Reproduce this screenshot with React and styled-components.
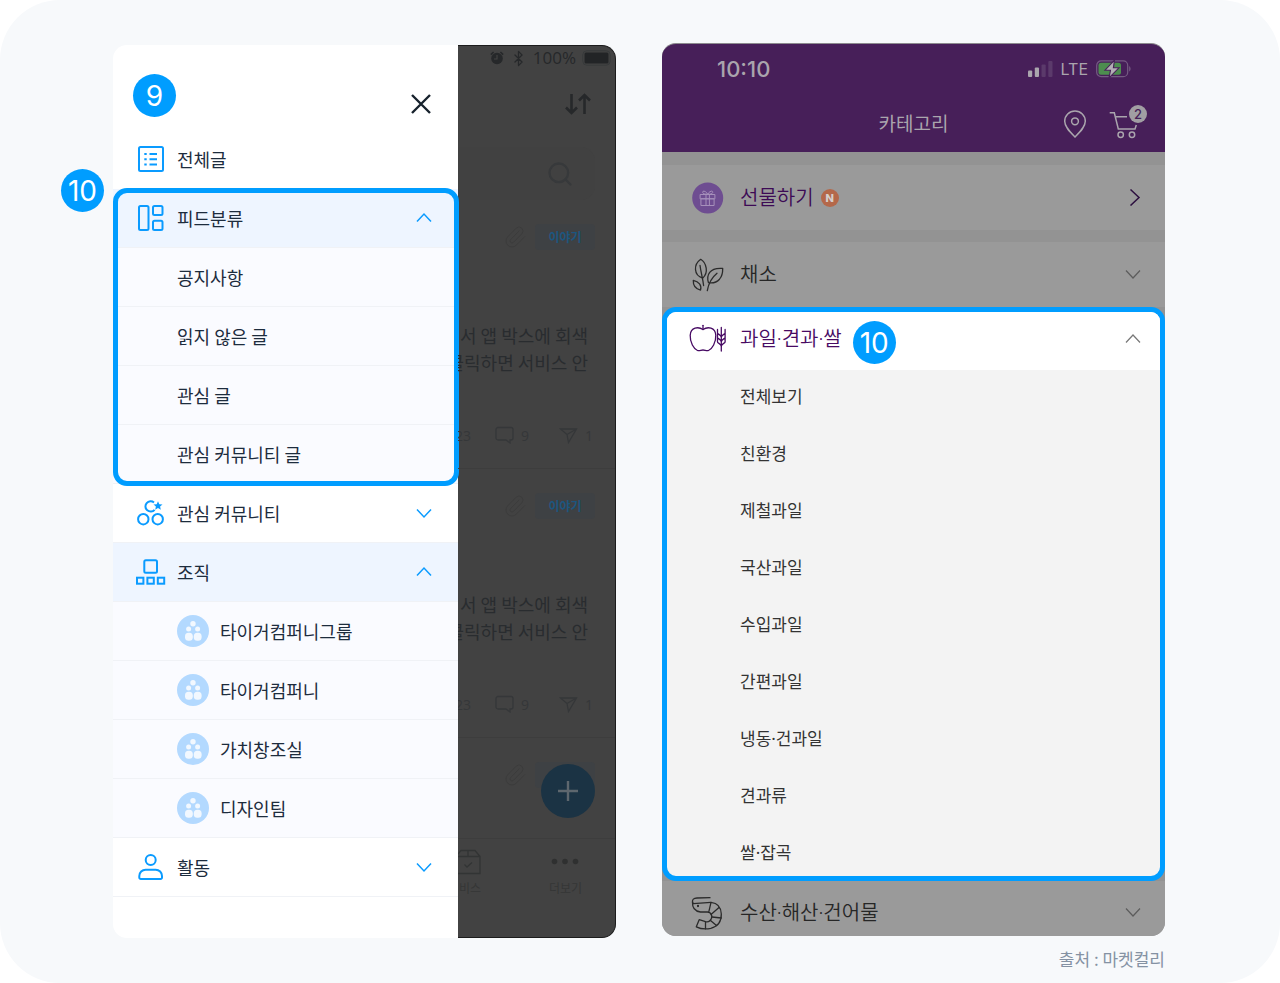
import React from "react";
import styled, { createGlobalStyle, css } from "styled-components";
import { Paperclip, Search, Bluetooth } from "lucide-react";

const GlobalStyle = createGlobalStyle`
  *, *::before, *::after {
    box-sizing: border-box;
  }

  body {
    margin: 0;
    background: #ffffff;
    font-family: "Noto Sans CJK KR", sans-serif;
  }

  button {
    border: 0;
    padding: 0;
    background: none;
    font: inherit;
    color: inherit;
    text-align: left;
    cursor: pointer;
  }

  a {
    color: inherit;
    text-decoration: none;
  }

  ul {
    list-style: none;
    margin: 0;
    padding: 0;
  }

  svg {
    display: block;
    flex: none;
  }
`;

const Page = styled.main`
  display: grid;
  grid-template-columns: minmax(0, 1fr) minmax(0, 1fr);
  gap: 46px;
  align-items: start;
  min-height: 100vh;
  padding: 43px 115px 11px 113px;
  border-radius: 60px;
  background: #f7f9fb;

  @media (max-width: 960px) {
    grid-template-columns: minmax(0, 1fr);
  }
`;

/* ---------- shared ---------- */

const Badge = styled.span`
  position: absolute;
  display: flex;
  align-items: center;
  justify-content: center;
  width: 43px;
  height: 43px;
  padding-top: 2px;
  border-radius: 50%;
  background: #009dff;
  color: #ffffff;
  font-family: Inter, sans-serif;
  font-size: 28px;
  font-weight: 400;
  line-height: 41px;
  z-index: 2;
`;

const ChevronSvg = ({ direction = "down", color, width = 1.5 }) => {
  const paths = {
    down: "M1 4.5 8 12l7-7.5",
    up: "M1 11.5 8 4l7 7.5",
    right: "M5.5 0.5 14 8.5 5.5 16.5",
  };
  return (
    <svg width="16" height="17" viewBox="0 0 16 17" fill="none" stroke={color} strokeWidth={width} aria-hidden="true">
      <path d={paths[direction]} />
    </svg>
  );
};

/* ---------- community app ---------- */

const CommunityPhone = styled.section`
  display: grid;
  grid-template-columns: 345px minmax(0, 1fr);
  margin-top: 2px;
`;

const Drawer = styled.nav`
  position: relative;
  border-radius: 14px 0 0 14px;
  background: #ffffff;
  color: #1d2c3d;
`;

const DrawerBadge = styled(Badge)`
  top: 29px;
  left: 20px;
`;

const DrawerHeader = styled.div`
  display: flex;
  align-items: flex-end;
  justify-content: flex-end;
  height: 85px;
  padding: 0 26px 15px;
`;

const DrawerRow = styled.button`
  display: flex;
  align-items: center;
  gap: 10px;
  width: 100%;
  height: 59px;
  padding: 0 26px 0 22px;
  font-size: 18px;
  line-height: 26px;
  border-bottom: 1px solid ${(p) => (p.$plain ? "#ffffff" : "#f0f2f6")};
  background: ${(p) => (p.$open ? "#eef5ff" : "transparent")};

  > svg:last-child:not(:first-child) {
    margin-left: auto;
  }
`;

const SubRow = styled(DrawerRow)`
  gap: 11px;
  padding-left: 64px;
  background: #fafbff;
`;

const FeedGroup = styled.div`
  position: relative;

  &::after {
    content: "";
    position: absolute;
    inset: -1px -1px -2px 0;
    border: 5px solid #009dff;
    border-radius: 14px;
    pointer-events: none;
  }
`;

const FeedBadge = styled(Badge)`
  top: -20px;
  left: -52px;
`;

const MenuIcon = ({ children }) => (
  <svg width="32" height="32" viewBox="0 0 32 32" fill="none" stroke="#0a9bff" strokeWidth="2" aria-hidden="true">
    {children}
  </svg>
);

const ListIcon = () => (
  <MenuIcon>
    <rect x="4" y="4" width="24" height="24" rx="1.5" />
    <path d="M9.3 11h2.4M9.3 16.2h2.4M9.3 21.4h2.4M14.5 11H22M14.5 16.2H22M14.5 21.4H22" />
  </MenuIcon>
);

const FeedIcon = () => (
  <MenuIcon>
    <rect x="4" y="4" width="9.5" height="24" rx="1.5" />
    <rect x="18" y="4" width="9.5" height="9" rx="1.5" />
    <rect x="18" y="18.7" width="9.5" height="9.3" rx="1.5" />
  </MenuIcon>
);

const CommunityIcon = () => (
  <MenuIcon>
    <circle cx="8.3" cy="22.2" r="5.2" />
    <circle cx="22.7" cy="22.2" r="5.2" />
    <path d="M19 5.4a5.2 5.2 0 1 0 .6 7.4" />
    <path
      d="M23 4.2l1.3 3 3.2.3-2.4 2.1.7 3.2-2.8-1.7-2.8 1.7.7-3.2-2.4-2.1 3.2-.3z"
      fill="#0a9bff"
      stroke="none"
    />
  </MenuIcon>
);

const OrgIcon = () => (
  <MenuIcon>
    <rect x="9.3" y="4.3" width="12.7" height="12.5" rx="1.5" />
    <rect x="2" y="21.7" width="6.4" height="6" />
    <rect x="12.4" y="21.7" width="6.4" height="6" />
    <rect x="22.8" y="21.7" width="6.4" height="6" />
  </MenuIcon>
);

const PersonIcon = () => (
  <MenuIcon>
    <circle cx="15.7" cy="9" r="5" />
    <path d="M4.3 26.5V25a6.3 6.3 0 0 1 6.3-6.3h10.1A6.3 6.3 0 0 1 27 25v1.5a1.5 1.5 0 0 1-1.5 1.5H5.8a1.5 1.5 0 0 1-1.5-1.5z" />
  </MenuIcon>
);

const TeamAvatar = () => (
  <svg width="32" height="32" viewBox="0 0 32 32" fill="#f2f8ff" aria-hidden="true">
    <circle cx="16" cy="16" r="16" fill="#b3d9ff" />
    <circle cx="16" cy="8.7" r="2.7" />
    <circle cx="11.6" cy="14" r="2.5" />
    <circle cx="20.6" cy="14" r="2.5" />
    <rect x="8" y="17.7" width="7.8" height="8" rx="3.5" />
    <rect x="16.8" y="17.7" width="7.8" height="8" rx="3.5" />
  </svg>
);

const Feed = styled.div`
  overflow: hidden;
  border: 1px solid #1c1c1c;
  border-left: 0;
  border-radius: 0 14px 14px 0;
  background: #424242;
  color: #292c2f;
`;

const FeedStatus = styled.div`
  display: flex;
  align-items: center;
  justify-content: flex-end;
  gap: 6px;
  height: 24px;
  padding-right: 4px;
  font-family: "Open Sans", sans-serif;
  font-size: 17px;
  line-height: 24px;
  color: #26282a;
`;

const FeedTools = styled.div`
  display: flex;
  align-items: center;
  justify-content: flex-end;
  height: 68px;
  padding-right: 23px;
`;

const SearchBox = styled.div`
  display: flex;
  align-items: center;
  justify-content: flex-end;
  height: 53px;
  margin: 9px 20px 0 0;
  padding-right: 21px;
  border-radius: 0 14px 14px 0;
  background: #414141;
  color: #37393b;
`;

const Post = styled.article`
  height: ${(p) => (p.$short ? "101px" : "269px")};
  padding: 24px 20px 0 0;
  border-bottom: 1px solid #3d3d3d;
`;

const PostTop = styled.div`
  display: flex;
  align-items: center;
  justify-content: flex-end;
  gap: 8px;
  height: 26px;
  color: #3c3c3c;
`;

const Tag = styled.span`
  width: 60px;
  height: 26px;
  border-radius: 4px;
  background: #3e4144;
  color: #1c567f;
  font-size: 12px;
  font-weight: 700;
  line-height: 26px;
  text-align: center;
`;

const PostText = styled.p`
  display: flex;
  flex-direction: column;
  align-items: flex-end;
  margin: 72px 7px 49px 0;
  font-size: 18px;
  line-height: 27px;
  white-space: nowrap;
`;

const PostStats = styled.div`
  display: flex;
  align-items: center;
  justify-content: flex-end;
  height: 20px;
  padding-right: 2px;
  font-family: "Open Sans", sans-serif;
  font-size: 14px;
  color: #353739;
`;

const Stat = styled.span`
  display: flex;
  align-items: center;
  gap: 7px;
  margin-left: ${(p) => p.$space || 0}px;
`;

const PostArea = styled.div`
  position: relative;
`;

const AddButton = styled.button`
  position: absolute;
  right: 20px;
  bottom: 21px;
  display: flex;
  align-items: center;
  justify-content: center;
  width: 54px;
  height: 54px;
  border-radius: 50%;
  background: #1b3344;
`;

const TabBar = styled.div`
  display: flex;
  justify-content: space-between;
  height: 98px;
  padding: 10px 33px 0 0;
  font-size: 12px;
  line-height: 18px;
  color: #353636;
`;

const Tab = styled.button`
  display: flex;
  flex-direction: column;
  align-items: ${(p) => (p.$cut ? "flex-end" : "center")};
  gap: 4px;
  width: ${(p) => (p.$cut ? "23px" : "auto")};
  height: 50px;
  white-space: nowrap;
`;

const AlarmIcon = () => (
  <svg width="14" height="14" viewBox="0 0 14 14" aria-hidden="true">
    <circle cx="7" cy="7.5" r="5.8" fill="#26282a" />
    <path d="M.8 3.6 3.6 1M13.2 3.6 10.4 1" stroke="#26282a" strokeWidth="1.5" />
    <path d="M7 4v4h-3" fill="none" stroke="#424242" strokeWidth="1.2" />
  </svg>
);

const BatteryIcon = () => (
  <svg width="29" height="16" viewBox="0 0 29 16" fill="none" aria-hidden="true">
    <rect x=".8" y=".8" width="27.4" height="14.4" rx="4" stroke="#373a3b" />
    <rect x="2.5" y="2.5" width="24" height="11" rx="1.5" fill="#222426" />
  </svg>
);

const SortIcon = () => (
  <svg width="28" height="22" viewBox="0 0 28 22" fill="none" stroke="#26282a" strokeWidth="2.6" aria-hidden="true">
    <path d="M7.5 1v19M2 14.5 7.5 20l5.5-5.5M20.5 21V2M15 7.5 20.5 2 26 7.5" />
  </svg>
);

const CommentIcon = () => (
  <svg width="19" height="18" viewBox="0 0 19 18" fill="none" stroke="#353739" strokeWidth="1.3" aria-hidden="true">
    <path d="M3 1.5h13a2 2 0 0 1 2 2V12a2 2 0 0 1-2 2h-1v3l-4-3H3a2 2 0 0 1-2-2V3.5a2 2 0 0 1 2-2z" />
  </svg>
);

const SendIcon = () => (
  <svg width="19" height="17" viewBox="0 0 19 17" fill="none" stroke="#353739" strokeWidth="1.3" aria-hidden="true">
    <path d="M1.5 2h16l-8 13.5L8 7.5zM8 7.5 17.5 2" />
  </svg>
);

const ServiceIcon = () => (
  <svg width="26" height="26" viewBox="0 0 26 26" fill="none" stroke="#323434" strokeWidth="1.3" aria-hidden="true">
    <path d="M1 7.5h24v17H1zM1 7.5l5-6h14l5 6M13 1.5v6M9.5 15.5 12 18l5-4.5" />
  </svg>
);

const feedItems = ["공지사항", "읽지 않은 글", "관심 글", "관심 커뮤니티 글"];
const orgItems = ["타이거컴퍼니그룹", "타이거컴퍼니", "가치창조실", "디자인팀"];

const FeedPost = () => (
  <Post>
    <PostTop>
      <Paperclip size={24} strokeWidth={1} />
      <Tag>이야기</Tag>
    </PostTop>
    <PostText>
      <span>서 앱 박스에 회색</span>
      <span>클릭하면 서비스 안</span>
    </PostText>
    <PostStats>
      <Stat>23</Stat>
      <Stat $space={24}>
        <CommentIcon />9
      </Stat>
      <Stat $space={30}>
        <SendIcon />1
      </Stat>
    </PostStats>
  </Post>
);

function CommunityApp() {
  return (
    <CommunityPhone>
      <Drawer aria-label="메뉴">
        <DrawerBadge>9</DrawerBadge>
        <DrawerHeader>
          <button type="button" aria-label="닫기">
            <svg width="22" height="22" viewBox="0 0 22 22" stroke="#17222d" strokeWidth="2.4">
              <path d="M2 2l18 18M20 2 2 20" />
            </svg>
          </button>
        </DrawerHeader>
        <DrawerRow type="button" $plain>
          <ListIcon />
          전체글
        </DrawerRow>
        <FeedGroup>
          <FeedBadge>10</FeedBadge>
          <DrawerRow type="button" $open aria-expanded="true">
            <FeedIcon />
            피드분류
            <ChevronSvg direction="up" color="#0a9bff" />
          </DrawerRow>
          {feedItems.map((item) => (
            <SubRow type="button" key={item}>
              {item}
            </SubRow>
          ))}
        </FeedGroup>
        <DrawerRow type="button" aria-expanded="false">
          <CommunityIcon />
          관심 커뮤니티
          <ChevronSvg color="#0a9bff" />
        </DrawerRow>
        <DrawerRow type="button" $open aria-expanded="true">
          <OrgIcon />
          조직
          <ChevronSvg direction="up" color="#0a9bff" />
        </DrawerRow>
        {orgItems.map((item) => (
          <SubRow type="button" key={item}>
            <TeamAvatar />
            {item}
          </SubRow>
        ))}
        <DrawerRow type="button" aria-expanded="false">
          <PersonIcon />
          활동
          <ChevronSvg color="#0a9bff" />
        </DrawerRow>
      </Drawer>

      <Feed>
        <FeedStatus>
          <AlarmIcon />
          <Bluetooth size={17} strokeWidth={1.8} />
          <span>100%</span>
          <BatteryIcon />
        </FeedStatus>
        <FeedTools>
          <button type="button" aria-label="정렬">
            <SortIcon />
          </button>
        </FeedTools>
        <SearchBox>
          <Search size={28} strokeWidth={2} />
        </SearchBox>
        <PostArea>
          <FeedPost />
          <FeedPost />
          <Post $short>
            <PostTop>
              <Paperclip size={24} strokeWidth={1} />
              <Tag />
            </PostTop>
          </Post>
          <AddButton type="button" aria-label="글쓰기">
            <svg width="20" height="20" viewBox="0 0 20 20" stroke="#5e676e" strokeWidth="2.4">
              <path d="M10 0v20M0 10h20" />
            </svg>
          </AddButton>
        </PostArea>
        <TabBar>
          <Tab type="button" $cut>
            <ServiceIcon />
            비스
          </Tab>
          <Tab type="button">
            <svg width="28" height="26" viewBox="0 0 28 26" fill="#2f3030" aria-hidden="true">
              <circle cx="3.5" cy="12.5" r="2.8" />
              <circle cx="14" cy="12.5" r="2.8" />
              <circle cx="24.5" cy="12.5" r="2.8" />
            </svg>
            더보기
          </Tab>
        </TabBar>
      </Feed>
    </CommunityPhone>
  );
}

/* ---------- market app ---------- */

const MarketPhone = styled.section`
  overflow: hidden;
  border-top: 1px solid #8c8a8e;
  border-radius: 14px;
  background: #939393;
  font-family: "Noto Sans", "Noto Sans CJK KR", sans-serif;
  font-weight: 350;
`;

const MarketHeader = styled.header`
  background: #471f59;
  color: #aaa5ad;
`;

const MarketStatus = styled.div`
  display: flex;
  align-items: center;
  gap: 8px;
  height: 50px;
  padding: 0 34px 0 55px;
  font-family: Inter, sans-serif;
  font-size: 16px;
  font-weight: 400;
`;

const Clock = styled.time`
  margin-right: auto;
  font-size: 22px;
  font-weight: 500;
`;

const TitleBar = styled.div`
  display: grid;
  grid-template-columns: 1fr auto 1fr;
  align-items: center;
  height: 58px;
  padding: 2px 18px 0;
`;

const Title = styled.h1`
  grid-column: 2;
  margin: 0;
  font-size: 19px;
  font-weight: 400;
  line-height: 28px;
`;

const TitleActions = styled.div`
  display: flex;
  align-items: center;
  justify-content: flex-end;
  gap: 22px;
`;

const CartButton = styled.button`
  position: relative;
`;

const CartCount = styled.span`
  position: absolute;
  top: 1px;
  right: 0;
  width: 18px;
  height: 18px;
  border-radius: 50%;
  background: #a19ea3;
  color: #471f59;
  font-family: Inter, sans-serif;
  font-size: 13px;
  font-weight: 500;
  line-height: 18px;
  text-align: center;
`;

const rowLayout = css`
  display: flex;
  align-items: center;
  gap: 13px;
  width: 100%;
  font-size: 20px;
  line-height: 28px;

  > svg:last-child {
    margin-left: auto;
  }
`;

const CategoryRow = styled.button`
  ${rowLayout}
  height: ${(p) => (p.$last ? "55px" : "65px")};
  margin-top: ${(p) => p.$space || 0}px;
  padding: ${(p) => (p.$last ? "8px" : "0")} 24px 0 27px;
  background: #9a9a9a;
  color: ${(p) => (p.$accent ? "#3d0a55" : "#262626")};
`;

const NewMark = styled.span`
  width: 18px;
  height: 18px;
  margin-left: -6px;
  border-radius: 50%;
  background: #b4684a;
  color: #d6cfcc;
  font-family: Inter, sans-serif;
  font-size: 11px;
  font-weight: 800;
  line-height: 18px;
  text-align: center;
`;

const OpenCategory = styled.div`
  border: 5px solid #009dff;
  border-radius: 14px;
  background: #f3f3f3;
  overflow: hidden;
`;

const OpenRow = styled.button`
  ${rowLayout}
  height: 58px;
  padding: 0 19px 4px 22px;
  background: #ffffff;
  color: #470a63;
`;

const OpenLabel = styled.span`
  position: relative;
`;

const OpenBadge = styled(Badge)`
  top: -4px;
  left: calc(100% + 11px);
`;

const SubList = styled.ul`
  display: flex;
  flex-direction: column;
  gap: 32px;
  padding: 14px 22px 11px 73px;
  font-size: 17px;
  font-weight: 400;
  line-height: 25px;
  color: #333333;

  a {
    display: block;
  }
`;

const Source = styled.p`
  margin: 10px 0 0;
  font-size: 17px;
  line-height: 26px;
  color: #8592a3;
  text-align: right;
`;

const SignalIcon = () => (
  <svg width="25" height="16" viewBox="0 0 25 16" fill="#aaa5ad" aria-hidden="true">
    <rect x="0" y="9.5" width="4.2" height="6.5" rx="1" />
    <rect x="6.8" y="6.5" width="4.2" height="9.5" rx="1" />
    <rect x="13.5" y="3.5" width="4.2" height="12.5" rx="1" fill="#5b3a6b" />
    <rect x="20.3" y="0" width="4.2" height="16" rx="1" fill="#5b3a6b" />
  </svg>
);

const ChargingIcon = () => (
  <svg width="35" height="18" viewBox="0 0 35 18" fill="none" aria-hidden="true">
    <rect x=".7" y=".9" width="31" height="15.8" rx="4.5" stroke="#755b83" strokeWidth="1.2" />
    <rect x="2.5" y="2.8" width="22.5" height="12" rx="2.5" fill="#4d8d4f" />
    <path d="M33.2 6.2c1.8.6 1.8 4.6 0 5.2z" fill="#755b83" />
    <path d="M18.5.2 9 10.2h5.5L13 17.8l10-10h-5.6z" fill="#b3afb5" stroke="#471f59" strokeWidth="1.1" />
  </svg>
);

const PinIcon = () => (
  <svg width="24" height="28" viewBox="0 0 24 28" fill="none" stroke="#aaa5ad" strokeWidth="1.5" aria-hidden="true">
    <path d="M12 27C7 22 1.7 17 1.7 11.3a10.3 10.3 0 0 1 20.6 0C22.3 17 17 22 12 27z" />
    <circle cx="12" cy="11.3" r="3.4" />
  </svg>
);

const CartIcon = () => (
  <svg width="38" height="40" viewBox="0 0 38 40" fill="none" stroke="#aaa5ad" strokeWidth="1.5" aria-hidden="true">
    <path d="M.7 8.7h4.6l4 16.3H26l1.3-4M7 12.7h11" />
    <circle cx="11.7" cy="30.7" r="2.7" />
    <circle cx="23" cy="30.7" r="2.7" />
  </svg>
);

const CategoryIcon = ({ color = "#2b2b2b", children }) => (
  <svg
    width="38"
    height="38"
    viewBox="0 0 38 38"
    fill="none"
    stroke={color}
    strokeWidth="1.3"
    strokeLinecap="round"
    strokeLinejoin="round"
    aria-hidden="true"
  >
    {children}
  </svg>
);

const GiftIcon = () => (
  <CategoryIcon color="#a690bb">
    <circle cx="18.7" cy="19" r="15.5" fill="#6e4d91" stroke="none" />
    <path
      d="M11.5 15.5h14.4v4.3H11.5zM12.3 19.8h12.8v6.7H12.3zM17 15.5v11M20.4 15.5v11M18.7 15.3c-1-3-5.4-4.5-5-1.8.2 1.3 2.5 1.8 5 1.8 2.5 0 4.8-.5 5-1.8.4-2.7-4-1.2-5 1.8z"
      strokeWidth="1"
    />
  </CategoryIcon>
);

const LeafIcon = () => (
  <CategoryIcon>
    <path d="M11.7 3.3C8 6 6.2 9.5 6.5 13.5c.3 4.5 2.8 7.3 7.3 8.5 2.8-2.5 4-5.8 3.4-9.8-.6-4-2.2-7-5.5-8.900z" />
    <path d="M11 9.3c.8 7 2.8 13 3.6 20.2" />
    <path d="M33.7 12.4c-6-.5-10.5.6-13 4-2.3 3-2.5 6.5-1.2 10.3 4.7.7 8.3-.4 11-3.5 2.3-2.8 3.3-6.3 3.2-10.800z" />
    <path d="M28 17.3c-5.5 4.5-8.3 9.2-9.7 17.3" />
    <path d="M4.3 24.3c-.3 5.2 1.8 8.5 7.2 9.8 1.5-4.6-1.6-8.6-7.2-9.8z" />
  </CategoryIcon>
);

const AppleIcon = () => (
  <CategoryIcon color="#470a63">
    <path d="M14 9.5C9.5 6.5 1.6 7 1.2 15.3.9 22.5 4.8 29 8.5 30.5c2 .7 3.5-.5 5.5-.5s3.5 1.2 5.5.5c3.7-1.5 7.6-8 7.3-15.2C26.4 7 18.5 6.5 14 9.5z" />
    <path d="M14 5.3v4.2" />
    <path d="M32.3 7.5V31M28.5 9.5V13c0 1.5 3.8 1.5 3.8 4.500 0-3 3.8-3 3.8-4.500V9.500M28.500 13v4.500c0 1.500 3.800 1.500 3.800 4.500 0-3 3.800-3 3.800-4.500V13M28.500 17.500V22c0 1.500 3.800 1.500 3.800 4.500 0-3 3.800-3 3.800-4.500v-4.500" />
  </CategoryIcon>
);

const ShrimpIcon = () => (
  <CategoryIcon>
    <path d="M21 3.7 8 4c-3.500.2-4.800 1.500-4.500 4l.8 1.700L22 8.300" />
    <path d="M3.500 8c-.3 5.500 2.500 9.300 8 10h7c3.500.5 5 3 4 6.300-1 2.700-3.200 4-6 3.400l-6.300-2L7.300 32.800c4 2 9.500 2.700 14.500 1.500C28.500 32.500 32.500 27.500 32.300 20 32 12.700 28.500 9 22 8.300l-2.200 9.500" />
    <path d="M22 20.500l8-7M23 23l9.300 1M21.500 26.500l6 5M16.500 28v6.800" />
    <circle cx="9" cy="12" r=".5" fill="#2b2b2b" />
  </CategoryIcon>
);

const fruitItems = [
  "전체보기",
  "친환경",
  "제철과일",
  "국산과일",
  "수입과일",
  "간편과일",
  "냉동·건과일",
  "견과류",
  "쌀·잡곡",
];

function MarketApp() {
  return (
    <div>
      <MarketPhone>
        <MarketHeader>
          <MarketStatus>
            <Clock>10:10</Clock>
            <SignalIcon />
            <span>LTE</span>
            <ChargingIcon />
          </MarketStatus>
          <TitleBar>
            <Title>카테고리</Title>
            <TitleActions>
              <button type="button" aria-label="배송지">
                <PinIcon />
              </button>
              <CartButton type="button" aria-label="장바구니">
                <CartIcon />
                <CartCount>2</CartCount>
              </CartButton>
            </TitleActions>
          </TitleBar>
        </MarketHeader>
        <CategoryRow type="button" $accent $space={13}>
          <GiftIcon />
          선물하기
          <NewMark>N</NewMark>
          <ChevronSvg direction="right" color="#2d1040" />
        </CategoryRow>
        <CategoryRow type="button" $space={12} aria-expanded="false">
          <LeafIcon />
          채소
          <ChevronSvg color="#5c5c5c" width={1.2} />
        </CategoryRow>
        <OpenCategory>
          <OpenRow type="button" aria-expanded="true">
            <AppleIcon />
            <OpenLabel>
              과일·견과·쌀
              <OpenBadge>10</OpenBadge>
            </OpenLabel>
            <ChevronSvg direction="up" color="#777777" width={1.2} />
          </OpenRow>
          <SubList>
            {fruitItems.map((item) => (
              <li key={item}>
                <a href="#category">{item}</a>
              </li>
            ))}
          </SubList>
        </OpenCategory>
        <CategoryRow type="button" $last aria-expanded="false">
          <ShrimpIcon />
          수산·해산·건어물
          <ChevronSvg color="#5c5c5c" width={1.2} />
        </CategoryRow>
      </MarketPhone>
      <Source>출처 : 마켓컬리</Source>
    </div>
  );
}

export default function App() {
  return (
    <>
      <GlobalStyle />
      <Page>
        <CommunityApp />
        <MarketApp />
      </Page>
    </>
  );
}
